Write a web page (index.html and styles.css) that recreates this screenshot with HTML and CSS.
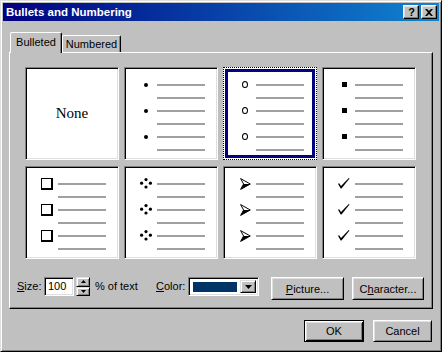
FILE: index.html
```html
<!DOCTYPE html>
<html>
<head>
<meta charset="utf-8">
<link rel="stylesheet" href="styles.css">
</head>
<body>
<div class="window">
  <div class="titlebar">
    <span class="title">Bullets and Numbering</span>
    <div class="tbtns">
      <div class="tbtn help">?</div>
      <div class="tbtn">
        <svg width="8" height="7" viewBox="0 0 8 7"><path d="M0 0h2l2 2 2-2h2L5 3.5 8 7H6L4 5 2 7H0l3-3.5z" fill="#000"/></svg>
      </div>
    </div>
  </div>
  <div class="content">
    <div class="tabs">
      <div class="tab active">Bulleted</div>
      <div class="tab">Numbered</div>
    </div>
    <div class="panel">
      <div class="grid">
        <div class="card none">None</div>

        <div class="card">
          <div class="row"><span class="cell"><span class="b-dot"></span></span><span class="line"></span></div>
          <div class="row"><span class="cell"></span><span class="line"></span></div>
          <div class="row"><span class="cell"><span class="b-dot"></span></span><span class="line"></span></div>
          <div class="row"><span class="cell"></span><span class="line"></span></div>
          <div class="row"><span class="cell"><span class="b-dot"></span></span><span class="line"></span></div>
          <div class="row"><span class="cell"></span><span class="line"></span></div>
        </div>

        <div class="card sel">
          <div class="row"><span class="cell"><span class="b-ring"></span></span><span class="line"></span></div>
          <div class="row"><span class="cell"></span><span class="line"></span></div>
          <div class="row"><span class="cell"><span class="b-ring"></span></span><span class="line"></span></div>
          <div class="row"><span class="cell"></span><span class="line"></span></div>
          <div class="row"><span class="cell"><span class="b-ring"></span></span><span class="line"></span></div>
          <div class="row"><span class="cell"></span><span class="line"></span></div>
        </div>

        <div class="card">
          <div class="row"><span class="cell"><span class="b-sq"></span></span><span class="line"></span></div>
          <div class="row"><span class="cell"></span><span class="line"></span></div>
          <div class="row"><span class="cell"><span class="b-sq"></span></span><span class="line"></span></div>
          <div class="row"><span class="cell"></span><span class="line"></span></div>
          <div class="row"><span class="cell"><span class="b-sq"></span></span><span class="line"></span></div>
          <div class="row"><span class="cell"></span><span class="line"></span></div>
        </div>

        <div class="card">
          <div class="row"><span class="cell"><span class="b-box"></span></span><span class="line"></span></div>
          <div class="row"><span class="cell"></span><span class="line"></span></div>
          <div class="row"><span class="cell"><span class="b-box"></span></span><span class="line"></span></div>
          <div class="row"><span class="cell"></span><span class="line"></span></div>
          <div class="row"><span class="cell"><span class="b-box"></span></span><span class="line"></span></div>
          <div class="row"><span class="cell"></span><span class="line"></span></div>
        </div>

        <div class="card">
          <div class="row"><span class="cell"><svg width="12" height="11" viewBox="0 0 12 11"><circle cx="6" cy="1.6" r="1.6"/><circle cx="1.6" cy="5.2" r="1.6"/><circle cx="10.4" cy="5.2" r="1.6"/><circle cx="6" cy="9" r="1.6"/></svg></span><span class="line"></span></div>
          <div class="row"><span class="cell"></span><span class="line"></span></div>
          <div class="row"><span class="cell"><svg width="12" height="11" viewBox="0 0 12 11"><circle cx="6" cy="1.6" r="1.6"/><circle cx="1.6" cy="5.2" r="1.6"/><circle cx="10.4" cy="5.2" r="1.6"/><circle cx="6" cy="9" r="1.6"/></svg></span><span class="line"></span></div>
          <div class="row"><span class="cell"></span><span class="line"></span></div>
          <div class="row"><span class="cell"><svg width="12" height="11" viewBox="0 0 12 11"><circle cx="6" cy="1.6" r="1.6"/><circle cx="1.6" cy="5.2" r="1.6"/><circle cx="10.4" cy="5.2" r="1.6"/><circle cx="6" cy="9" r="1.6"/></svg></span><span class="line"></span></div>
          <div class="row"><span class="cell"></span><span class="line"></span></div>
        </div>

        <div class="card">
          <div class="row"><span class="cell"><svg width="11" height="12" viewBox="0 0 11 12"><path d="M0.6 0.6 L10.3 6 L0.6 11.4 L3.6 6 Z" fill="#fff" stroke="#000" stroke-width="1" stroke-linejoin="miter"/><path d="M3.6 6 L10.3 6 L0.6 11.4 Z" fill="#000"/></svg></span><span class="line"></span></div>
          <div class="row"><span class="cell"></span><span class="line"></span></div>
          <div class="row"><span class="cell"><svg width="11" height="12" viewBox="0 0 11 12"><path d="M0.6 0.6 L10.3 6 L0.6 11.4 L3.6 6 Z" fill="#fff" stroke="#000" stroke-width="1" stroke-linejoin="miter"/><path d="M3.6 6 L10.3 6 L0.6 11.4 Z" fill="#000"/></svg></span><span class="line"></span></div>
          <div class="row"><span class="cell"></span><span class="line"></span></div>
          <div class="row"><span class="cell"><svg width="11" height="12" viewBox="0 0 11 12"><path d="M0.6 0.6 L10.3 6 L0.6 11.4 L3.6 6 Z" fill="#fff" stroke="#000" stroke-width="1" stroke-linejoin="miter"/><path d="M3.6 6 L10.3 6 L0.6 11.4 Z" fill="#000"/></svg></span><span class="line"></span></div>
          <div class="row"><span class="cell"></span><span class="line"></span></div>
        </div>

        <div class="card">
          <div class="row"><span class="cell"><svg width="12" height="11" viewBox="0 0 12 11"><path d="M0 5.8 L1.2 5.2 L3 8 L10.8 0 L11.5 0.6 L3.5 10.6 L2.7 10.6 Z" fill="#000"/></svg></span><span class="line"></span></div>
          <div class="row"><span class="cell"></span><span class="line"></span></div>
          <div class="row"><span class="cell"><svg width="12" height="11" viewBox="0 0 12 11"><path d="M0 5.8 L1.2 5.2 L3 8 L10.8 0 L11.5 0.6 L3.5 10.6 L2.7 10.6 Z" fill="#000"/></svg></span><span class="line"></span></div>
          <div class="row"><span class="cell"></span><span class="line"></span></div>
          <div class="row"><span class="cell"><svg width="12" height="11" viewBox="0 0 12 11"><path d="M0 5.8 L1.2 5.2 L3 8 L10.8 0 L11.5 0.6 L3.5 10.6 L2.7 10.6 Z" fill="#000"/></svg></span><span class="line"></span></div>
          <div class="row"><span class="cell"></span><span class="line"></span></div>
        </div>
      </div>

      <div class="controls">
        <span class="lbl lbl-size"><u>S</u>ize:</span>
        <div class="field num">100</div>
        <div class="spin">
          <div class="spin-btn"><svg width="5" height="3" viewBox="0 0 5 3"><path d="M2.5 0 L5 3 H0 Z" fill="#000"/></svg></div>
          <div class="spin-btn"><svg width="5" height="3" viewBox="0 0 5 3"><path d="M0 0 H5 L2.5 3 Z" fill="#000"/></svg></div>
        </div>
        <span class="lbl lbl-pct">% of text</span>
        <span class="lbl lbl-color"><u>C</u>olor:</span>
        <div class="field combo">
          <span class="swatch"></span>
          <span class="drop"><svg width="7" height="4" viewBox="0 0 7 4"><path d="M0 0 H7 L3.5 4 Z" fill="#000"/></svg></span>
        </div>
        <div class="btn btn-pic"><u>P</u>icture...</div>
        <div class="btn btn-char">C<u>h</u>aracter...</div>
      </div>
    </div>

    <div class="footer">
      <div class="btn default ok">OK</div>
      <div class="btn cancel">Cancel</div>
    </div>
  </div>
</div>
</body>
</html>
```

FILE: styles.css
```css
* { box-sizing: border-box; }

body {
  margin: 0;
  background: #c0c0c0;
  font-family: "Liberation Sans", Arial, sans-serif;
  font-size: 11px;
  color: #000;
}

.window {
  width: 442px;
  height: 352px;
  background: #c0c0c0;
  border: 1px solid;
  border-color: #dfdfdf #000 #000 #dfdfdf;
  box-shadow: inset 1px 1px #fff, inset -1px -1px #808080;
  padding: 2px;
  display: flex;
  flex-direction: column;
}

.titlebar {
  height: 18px;
  flex: none;
  background: linear-gradient(to right, #000080, #1084d0);
  display: flex;
  align-items: center;
  padding: 0 2px 0 3px;
  color: #fff;
  font-weight: bold;
  font-size: 11.5px;
}

.tbtns {
  margin-left: auto;
  display: flex;
  gap: 2px;
}

.tbtn {
  width: 16px;
  height: 14px;
  background: #c0c0c0;
  border: 1px solid;
  border-color: #fff #000 #000 #fff;
  box-shadow: inset -1px -1px #808080, inset 1px 1px #dfdfdf;
  display: flex;
  align-items: center;
  justify-content: center;
  color: #000;
}

.tbtn.help {
  font-size: 11px;
  font-weight: bold;
  line-height: 11px;
  padding-left: 1px;
}

.content {
  flex: 1;
  padding: 11px 6px 0 6px;
  display: flex;
  flex-direction: column;
}

.tabs {
  display: flex;
  align-items: flex-end;
  height: 21px;
  padding-left: 1px;
  margin-bottom: -1px;
  position: relative;
  z-index: 1;
}

.tab {
  height: 17px;
  margin-bottom: 1px;
  width: 59px;
  background: #c0c0c0;
  border-left: 1px solid #fff;
  border-top: 1px solid #fff;
  border-right: 1px solid #000;
  box-shadow: inset -1px 0 #808080;
  border-top-left-radius: 2px;
  border-top-right-radius: 2px;
  padding-top: 2px;
  text-align: center;
  line-height: 13px;
}

.tab.active {
  width: 52px;
  height: 21px;
  margin-bottom: 0;
  padding-top: 3px;
}

.panel {
  height: 257px;
  flex: none;
  border-left: 1px solid #fff;
  border-top: 1px solid #fff;
  border-right: 1px solid #000;
  border-bottom: 1px solid #000;
  box-shadow: inset -1px -1px #808080;
  padding: 14px 0 0 7px;
}

.grid {
  margin-left: 8px;
  display: grid;
  grid-template-columns: repeat(4, 94px);
  grid-template-rows: repeat(2, 93px);
  column-gap: 5px;
  row-gap: 6px;
}

.card {
  background: #fff;
  border: 1px solid;
  border-color: #808080 #fff #fff #808080;
  box-shadow: inset 1px 1px #000, inset -1px -1px #dfdfdf;
  padding: 10px 0 0 15px;
}

.card.sel {
  border: 1px dotted #000;
  box-shadow: inset 0 0 0 1px #fff, inset 0 0 0 4px #000080;
}

.card.none {
  padding: 0;
  display: flex;
  align-items: center;
  justify-content: center;
  font-family: "Liberation Serif", "Times New Roman", serif;
  font-size: 15px;
  padding-bottom: 1px;
}

.row {
  height: 13px;
  display: flex;
  align-items: center;
}

.cell {
  width: 12px;
  height: 13px;
  margin-right: 5px;
  display: flex;
  align-items: center;
  justify-content: center;
}

.cell svg { display: block; }

.line {
  width: 48px;
  height: 2px;
  background: #a0a0a0;
}

.b-dot {
  width: 4px;
  height: 4px;
  border-radius: 50%;
  background: #000;
}

.b-ring {
  width: 6px;
  height: 7px;
  border: 1px solid #000;
  border-radius: 50%;
}

.b-sq {
  width: 5px;
  height: 5px;
  background: #000;
}

.b-box {
  width: 12px;
  height: 12px;
  border-style: solid;
  border-color: #000;
  border-width: 1px 2px 2px 1px;
}

.controls {
  margin-top: 18px;
  display: flex;
  align-items: flex-start;
  height: 23px;
}

.lbl {
  line-height: 19px;
  white-space: nowrap;
}

.lbl-size { width: 27px; }
.lbl-pct { width: 61px; margin-left: 5px; }
.lbl-color { width: 32px; }

.field {
  height: 19px;
  background: #fff;
  border: 1px solid;
  border-color: #808080 #fff #fff #808080;
  box-shadow: inset 1px 1px #000, inset -1px -1px #dfdfdf;
}

.num {
  width: 30px;
  padding-left: 3px;
  line-height: 17px;
}

.spin {
  width: 14px;
  height: 19px;
  margin-left: 2px;
  display: flex;
  flex-direction: column;
}

.spin-btn {
  flex: 1;
  background: #c0c0c0;
  border: 1px solid;
  border-color: #dfdfdf #000 #000 #dfdfdf;
  box-shadow: inset 1px 1px #fff, inset -1px -1px #808080;
  display: flex;
  align-items: center;
  justify-content: center;
}

.combo {
  width: 71px;
  display: flex;
  align-items: stretch;
  padding: 2px;
}

.swatch {
  flex: 1;
  margin: 2px 3px 1px 2px;
  background: #003366;
  outline: 1px solid #fff;
}

.drop {
  width: 16px;
  background: #c0c0c0;
  border: 1px solid;
  border-color: #dfdfdf #000 #000 #dfdfdf;
  box-shadow: inset 1px 1px #fff, inset -1px -1px #808080;
  display: flex;
  align-items: center;
  justify-content: center;
}

.btn {
  height: 23px;
  background: #c0c0c0;
  border: 1px solid;
  border-color: #fff #000 #000 #fff;
  box-shadow: inset 1px 1px #dfdfdf, inset -1px -1px #808080;
  display: flex;
  align-items: center;
  justify-content: center;
  white-space: nowrap;
}

.btn-pic { width: 73px; margin-left: 12px; }
.btn-char { width: 72px; margin-left: 8px; }

.footer {
  margin-top: 11px;
  display: flex;
  justify-content: flex-end;
  gap: 9px;
  padding-right: 1px;
}

.footer .btn { height: 22px; }

.btn.default {
  border: 1px solid #000;
  box-shadow: inset 1px 1px #fff, inset -1px -1px #000, inset 2px 2px #dfdfdf, inset -2px -2px #808080;
}

.ok { width: 60px; }
.cancel { width: 59px; }
```
